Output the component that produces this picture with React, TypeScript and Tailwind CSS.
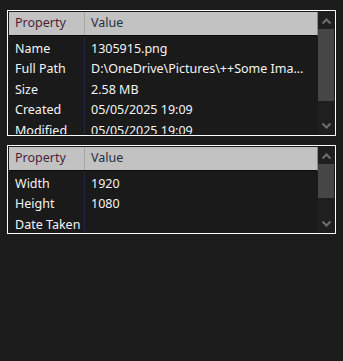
import React from 'react';

type Row = { name: string; value: string };

const fileRows: Row[] = [
  { name: 'Name', value: '1305915.png' },
  { name: 'Full Path', value: 'D:\\OneDrive\\Pictures\\++Some Images\\1305915.png' },
  { name: 'Size', value: '2.58 MB' },
  { name: 'Created', value: '05/05/2025 19:09' },
  { name: 'Modified', value: '05/05/2025 19:09' },
];

const imageRows: Row[] = [
  { name: 'Width', value: '1920' },
  { name: 'Height', value: '1080' },
  { name: 'Date Taken', value: '' },
];

const Chevron = ({ up }: { up?: boolean }) => (
  <svg width="9" height="6" viewBox="0 0 9 6" className={up ? '' : 'rotate-180'}>
    <path d="M0.5 5.5 L4.5 1.5 L8.5 5.5" fill="none" stroke="#6e6e6e" strokeWidth="2" />
  </svg>
);

const ScrollBar = ({ thumbHeight }: { thumbHeight: string }) => (
  <div className="flex w-[16px] flex-col bg-[#1f1f1f]">
    <div className="flex h-[17px] items-center justify-center">
      <Chevron up />
    </div>
    <div className={`${thumbHeight} bg-[#464646]`} />
    <div className="flex-1" />
    <div className="flex h-[17px] items-center justify-center">
      <Chevron />
    </div>
  </div>
);

const PropertyList = ({
  rows,
  height,
  thumbHeight,
}: {
  rows: Row[];
  height: string;
  thumbHeight: string;
}) => (
  <div className={`flex w-[329px] ${height} border border-white bg-[#1a1a1a] p-px`}>
    <div className="flex min-w-0 flex-1 flex-col overflow-hidden">
      <div className="flex h-[24px] shrink-0 border-b border-r border-b-[#0a0a0a] border-r-[#8a8a8a] bg-[#c2c2c2] leading-[22px]">
        <div className="w-[76px] border-r border-[#a6a6a6] pl-[6px] text-[#4a1f3c]">Property</div>
        <div className="pl-[6px] text-[#283040]">Value</div>
      </div>
      <div className="relative flex-1 overflow-hidden pt-[3px]">
        <div className="absolute bottom-0 left-[75px] top-0 w-px bg-[#1c2a3c]" />
        {rows.map((row) => (
          <div key={row.name} className="flex h-[20.5px] items-center text-[#f4f4f4]">
            <div className="w-[76px] shrink-0 pl-[6px]">{row.name}</div>
            <div className="min-w-0 flex-1 truncate pl-[6px] pr-[10px]">{row.value}</div>
          </div>
        ))}
      </div>
    </div>
    <ScrollBar thumbHeight={thumbHeight} />
  </div>
);

export default function App() {
  return (
    <div
      className="flex h-[361px] w-[343px] flex-col gap-[9px] bg-[#1c1c1c] pl-[7px] pt-[10px] text-[12.5px]"
      style={{ fontFamily: '"Noto Sans", "Open Sans", sans-serif' }}
    >
      <PropertyList rows={fileRows} height="h-[126px]" thumbHeight="h-[72px]" />
      <PropertyList rows={imageRows} height="h-[89px]" thumbHeight="h-[34px]" />
    </div>
  );
}
